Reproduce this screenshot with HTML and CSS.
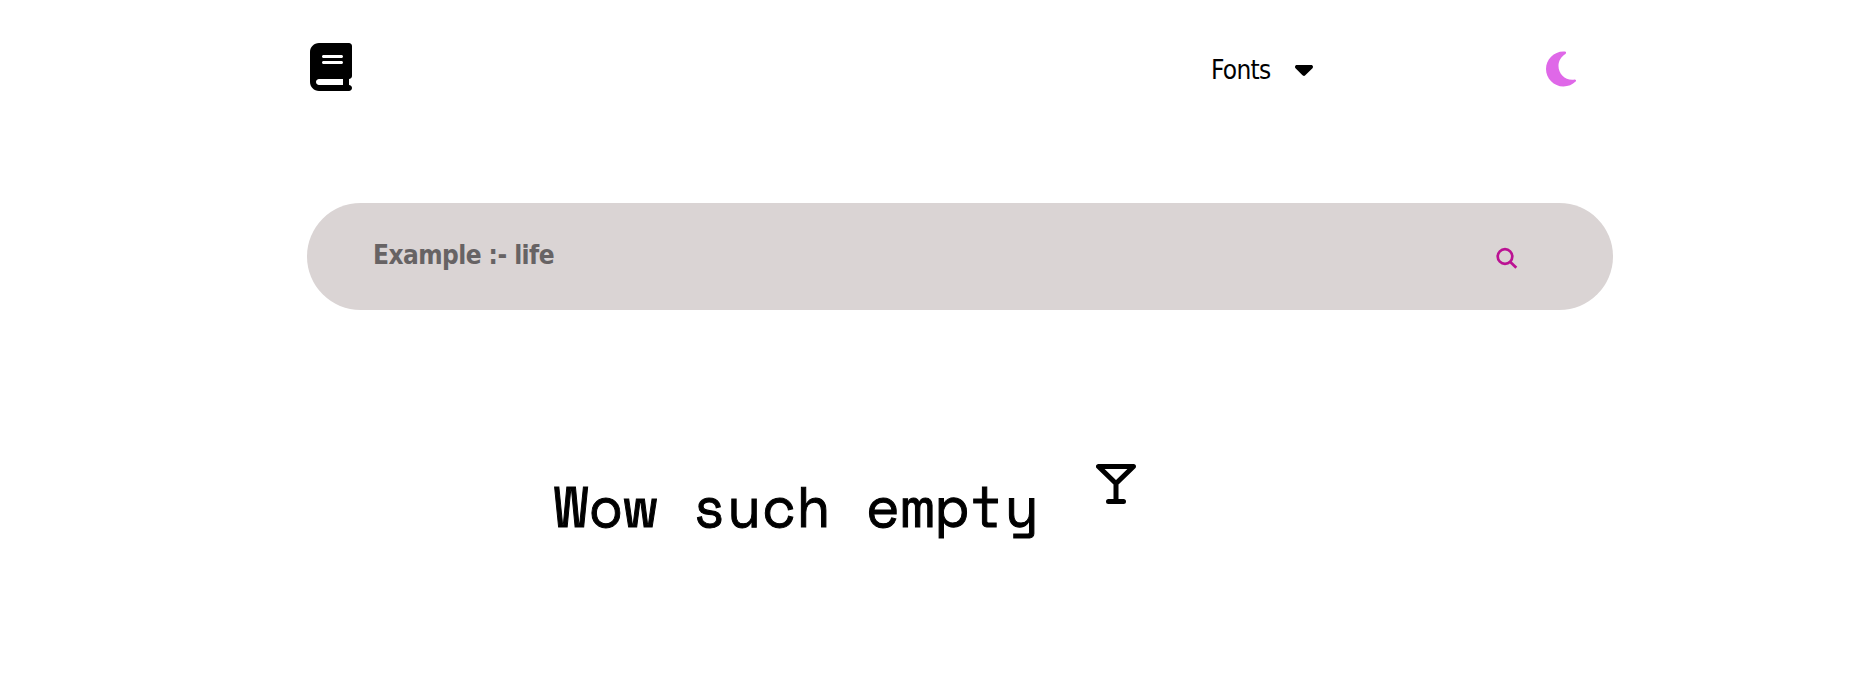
FILE: index.html
```html
<!DOCTYPE html>
<html lang="en">
<head>
<meta charset="utf-8">
<title>Dictionary</title>
<link rel="stylesheet" href="styles.css">
</head>
<body>
<div class="page">
  <header class="header">
    <svg class="book" viewBox="0 0 448 512" preserveAspectRatio="none"><path d="M96 0C43 0 0 43 0 96V416c0 53 43 96 96 96H384h32c17.7 0 32-14.3 32-32s-14.3-32-32-32V384c17.7 0 32-14.3 32-32V32c0-17.7-14.3-32-32-32H384 96zm0 384H352v64H96c-17.7 0-32-14.3-32-32s14.3-32 32-32zm32-240c0-8.8 7.2-16 16-16H336c8.8 0 16 7.2 16 16s-7.2 16-16 16H144c-8.8 0-16-7.2-16-16zm16 48H336c8.8 0 16 7.2 16 16s-7.2 16-16 16H144c-8.8 0-16-7.2-16-16s7.2-16 16-16z"/></svg>
    <div class="fonts">
      <span class="fonts-label">Fonts</span>
      <svg class="caret" viewBox="0 192 320 192"><path d="M137.4 374.6c12.5 12.5 32.8 12.5 45.3 0l128-128c9.2-9.2 11.9-22.9 6.9-34.9s-16.6-19.8-29.6-19.8L32 192c-12.9 0-24.6 7.8-29.6 19.8s-2.2 25.7 6.9 34.9l128 128z"/></svg>
    </div>
    <svg class="moon" viewBox="0 0 384 512"><path d="M223.5 32C100 32 0 132.3 0 256S100 480 223.5 480c60.6 0 115.5-24.2 155.8-63.4c5-4.9 6.3-12.5 3.1-18.7s-10.1-9.7-17-8.5c-9.8 1.7-19.8 2.6-30.1 2.6c-96.9 0-175.5-78.8-175.5-176c0-65.8 36-123.1 89.3-153.3c6.1-3.5 9.2-10.5 7.7-17.3s-7.3-11.9-14.3-12.5c-6.3-.5-12.6-.8-19-.8z"/></svg>
  </header>
  <form class="search">
    <input class="search-input" type="text" placeholder="Example :- life">
    <svg class="search-icon" viewBox="0 0 24 24"><circle cx="10" cy="10.5" r="7.3"/><path d="M15.1 15.7L21.3 21.8"/></svg>
  </form>
  <main class="empty">
    <h1 class="empty-text">Wow such empty</h1>
    <svg class="glass" viewBox="0 0 40 40"><path d="M2.5 2.5H37.5L20 19.5ZM20 19.5V37.5M12.5 37.5H27.5"/></svg>
  </main>
</div>
</body>
</html>
```
FILE: styles.css
```css
* { box-sizing: border-box; }

body {
  margin: 0;
  background: #fff;
  color: #000;
  font-family: Tahoma, "DejaVu Sans Condensed", "DejaVu Sans", sans-serif;
  font-stretch: condensed;
}

svg { display: block; flex: none; }

.page {
  width: 1306px;
  margin-left: 307px;
}

.header {
  display: flex;
  align-items: flex-start;
  height: 203px;
  padding: 43px 0 0 3px;
}

.book { width: 42px; height: 48px; }

.fonts {
  display: flex;
  align-items: center;
  height: 36px;
  margin: 9px 0 0 859px;
}

.fonts-label {
  width: 84px;
  font-size: 26px;
  letter-spacing: -0.7px;
  line-height: 36px;
}

.caret { width: 18px; height: 11px; }

.moon {
  width: 30px;
  height: 40px;
  margin: 6px 0 0 233px;
  fill: #df68e8;
}

.search {
  display: flex;
  align-items: center;
  height: 107px;
  padding: 0 94px 0 66px;
  border-radius: 54px;
  background: #dad4d4;
}

.search-input {
  flex: 1;
  min-width: 0;
  height: 60px;
  padding: 0 0 3px;
  border: 0;
  outline: 0;
  background: transparent;
  font: inherit;
  font-weight: bold;
  font-size: 26px;
  letter-spacing: -0.55px;
}

.search-input::placeholder { color: #676364; opacity: 1; }

.search-icon {
  width: 24px;
  height: 24px;
  margin-top: 3px;
  fill: none;
  stroke: #bb1293;
  stroke-width: 2.7;
}

.empty {
  display: flex;
  align-items: flex-start;
  padding: 154px 0 0 247px;
}

.empty-text {
  width: 542px;
  margin: 9px 0 0;
  font: 400 56px/66px "Space Mono", "DejaVu Sans Mono", monospace;
  letter-spacing: 0.38px;
  white-space: nowrap;
  -webkit-text-stroke: 1px #000;
}

.glass {
  width: 40px;
  height: 40px;
  fill: none;
  stroke: #000;
  stroke-width: 5;
  stroke-linecap: round;
  stroke-linejoin: round;
}
```
